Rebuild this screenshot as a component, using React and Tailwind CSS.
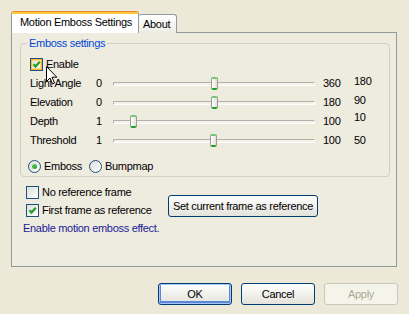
import React from "react";

const sliders = [
  { label: "Light Angle", min: 0, max: 360, value: 180, shift: "mb-[5px]" },
  { label: "Elevation", min: 0, max: 180, value: 90, shift: "mb-[5px]" },
  { label: "Depth", min: 1, max: 100, value: 10, shift: "mb-[9px]" },
  { label: "Threshold", min: 1, max: 100, value: 50, shift: "" },
];

const CheckBox = ({ checked, hover }) => (
  <span className="w-[13px] h-[13px] shrink-0 border border-[#1C5180] bg-gradient-to-br from-[#DCDCD7] to-white flex items-center justify-center">
    <span
      className={`w-[11px] h-[11px] flex items-center justify-center ${
        hover ? "border border-[#F8B636] shadow-[inset_0_0_0_1px_#FDDB8C]" : ""
      }`}
    >
      {checked && (
        <svg width="9" height="9" viewBox="0 0 9 9" className="shrink-0">
          <polyline
            points="1.5,4.2 3.5,6.5 7.8,1.8"
            fill="none"
            stroke="#21A121"
            strokeWidth="2.2"
          />
        </svg>
      )}
    </span>
  </span>
);

const Radio = ({ checked }) => (
  <span className="w-[13px] h-[13px] shrink-0 rounded-full border border-[#1C5180] bg-gradient-to-br from-[#DCDCD7] to-white flex items-center justify-center">
    {checked && (
      <span className="w-[5px] h-[5px] rounded-full bg-gradient-to-br from-[#5CD45A] to-[#1E9E1E]" />
    )}
  </span>
);

const Slider = ({ min, max, value }) => {
  const left = 3 + ((value - min) / (max - min)) * 196 - 3.5;
  return (
    <div className="relative w-[202px] h-[13px] flex items-center">
      <div className="w-full h-[4px] border border-[#B3B1A5] border-b-white border-r-white bg-[#F3F2EA] rounded-[1px]" />
      <div
        className="absolute top-0 w-[7px] h-[13px] rounded-[2px] overflow-hidden border-x border-[#9A9D95] flex flex-col"
        style={{ left }}
      >
        <div className="h-[2px] bg-[#6CCB69]" />
        <div className="flex-1 bg-gradient-to-r from-white to-[#E2E2DA]" />
        <div className="h-[2px] bg-[#21A121]" />
      </div>
    </div>
  );
};

const XPButton = ({ children, def, disabled }) => (
  <button
    className={`w-[74px] h-[22px] rounded-[3px] border text-[11px] leading-none ${
      disabled
        ? "border-[#C9C7BA] bg-[#F5F4EA] text-[#ACA899]"
        : "border-[#003C74] bg-gradient-to-b from-white to-[#E3E2DA] text-black"
    } ${def ? "shadow-[inset_0_0_0_1px_#A6C6F8,inset_0_-1px_0_2px_#5C86D8]" : ""}`}
  >
    {children}
  </button>
);

export default function App() {
  return (
    <div className="relative w-[409px] h-[314px] bg-[#ECE9D8] pt-[11px] font-['Liberation_Sans',Arial,sans-serif] text-[11px] tracking-[-0.3px] text-black overflow-hidden whitespace-nowrap">
      <div className="flex items-end ml-[11px] relative z-10 h-[22px] -mb-[1px]">
        <div className="w-[128px] h-[22px] rounded-t-[3px] border-t border-x border-[#E68B2C] border-x-[#919B9C] bg-white flex flex-col">
          <div className="h-[2px] bg-[#FFC73C]" />
          <div className="flex-1 flex items-center pl-[8px] pb-[2px] leading-[13px]">
            Motion Emboss Settings
          </div>
        </div>
        <div className="w-[38px] h-[19px] rounded-t-[3px] border-t border-r border-[#919B9C] bg-gradient-to-b from-white to-[#ECEBE6] flex items-center pl-[4px] leading-[13px]">
          About
        </div>
      </div>

      <div className="ml-[11px] w-[386px] h-[235px] border border-[#919B9C] bg-[#EEEBDF] pl-[8px] pt-[4px]">
        <fieldset className="w-[370px] border border-[#D0D0BF] rounded-[4px] pl-[9px] pb-[3px]">
          <legend className="-ml-[3px] px-[2px] text-[#0046D5] leading-[13px]">
            Emboss settings
          </legend>
          <div className="flex items-center gap-[3px] h-[14px] mt-[7px]">
            <CheckBox checked hover />
            <span className="leading-[13px]">Enable</span>
          </div>
          <div className="mt-[3px]">
            {sliders.map((s) => (
              <div key={s.label} className="flex items-center h-[19px] leading-[13px]">
                <span className="w-[66px]">{s.label}</span>
                <span className="w-[17px]">{s.min}</span>
                <Slider min={s.min} max={s.max} value={s.value} />
                <span className="ml-[8px] w-[31px]">{s.max}</span>
                <span className={s.shift}>{s.value}</span>
              </div>
            ))}
          </div>
          <div className="flex items-center h-[14px] mt-[9px] -ml-[2px] leading-[13px]">
            <div className="w-[61px] flex items-center gap-[3px]">
              <Radio checked />
              <span>Emboss</span>
            </div>
            <div className="flex items-center gap-[3px]">
              <Radio />
              <span>Bumpmap</span>
            </div>
          </div>
        </fieldset>

        <div className="grid grid-cols-[142px_auto] ml-[6px] mt-[8px] leading-[13px]">
          <div className="flex flex-col gap-[4px]">
            <div className="flex items-center gap-[3px] h-[14px]">
              <CheckBox />
              <span>No reference frame</span>
            </div>
            <div className="flex items-center gap-[3px] h-[14px]">
              <CheckBox checked />
              <span>First frame as reference</span>
            </div>
          </div>
          <button className="self-end w-[150px] h-[22px] rounded-[3px] border border-[#003C74] bg-gradient-to-b from-white to-[#E3E2DA] text-[11px] leading-none">
            Set current frame as reference
          </button>
        </div>

        <div className="ml-[3px] mt-[5px] leading-[13px] text-[#1B1B9A]">
          Enable motion emboss effect.
        </div>
      </div>

      <div className="flex justify-end gap-[9px] pr-[11px] mt-[16px]">
        <XPButton def>OK</XPButton>
        <XPButton>Cancel</XPButton>
        <XPButton disabled>Apply</XPButton>
      </div>

      <svg
        className="absolute left-[46px] top-[66px]"
        width="12"
        height="19"
        viewBox="0 0 12 19"
      >
        <path
          d="M0.5 0.5 L0.5 15.5 L4 12 L6.5 18 L8.5 17 L6 11.2 L10.8 11.2 Z"
          fill="white"
          stroke="black"
          strokeWidth="1"
        />
      </svg>
    </div>
  );
}
